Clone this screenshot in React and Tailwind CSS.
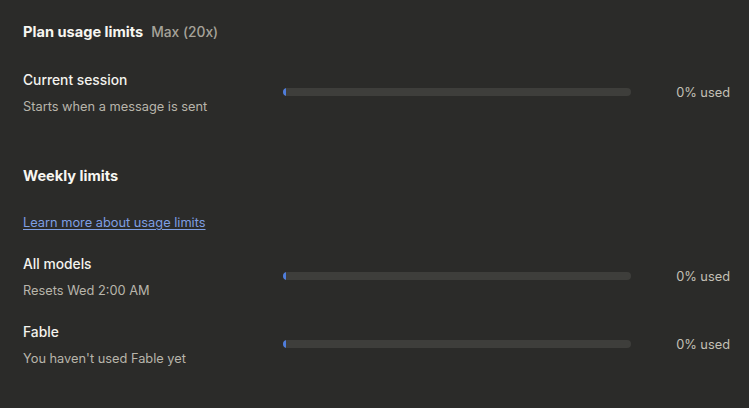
import React from 'react';

const UsageRow = ({ title, sub, pct }) => (
    <div className="flex items-center">
        <div className="w-[260px] shrink-0">
            <div className="text-[13.8px] leading-5 text-[#f4f3ee] font-medium">{title}</div>
            <div className="text-[12.8px] leading-5 text-[#b8b5ab] mt-[7px]">{sub}</div>
        </div>
        <div className="w-[348px] h-[8px] mb-[2px] rounded-full bg-[#3e3e3b] overflow-hidden">
            <div className="h-full w-[3px] bg-[#4f7ddb] rounded-l-full" style={{ width: `${Math.max(pct, 1)}%` }} />
        </div>
        <div className="flex-1 text-right text-[12.8px] text-[#c3c0b6] mb-[2px]">{pct}% used</div>
    </div>
);

export default function App() {
    return (
        <div className="w-[749px] h-[408px] bg-[#2b2b29] pl-[23px] pr-[19px] pt-[22px]" style={{ fontFamily: 'Inter, "Noto Sans", sans-serif' }}>
            <div className="flex items-baseline gap-2">
                <h2 className="text-[14.6px] font-bold text-[#f7f6f1]">Plan usage limits</h2>
                <span className="text-[13.8px] font-medium text-[#a6a39a]">Max (20x)</span>
            </div>

            <div className="mt-[26px]">
                <UsageRow title="Current session" sub="Starts when a message is sent" pct={0} />
            </div>

            <h3 className="mt-[49px] text-[14.6px] font-bold text-[#f7f6f1]">Weekly limits</h3>

            <a href="#" className="block mt-[25px] text-[12.8px] text-[#7f9fe3] underline underline-offset-2 w-fit">
                Learn more about usage limits
            </a>

            <div className="mt-[22px] space-y-[21px]">
                <UsageRow title="All models" sub="Resets Wed 2:00 AM" pct={0} />
                <UsageRow title="Fable" sub="You haven't used Fable yet" pct={0} />
            </div>
        </div>
    );
}
